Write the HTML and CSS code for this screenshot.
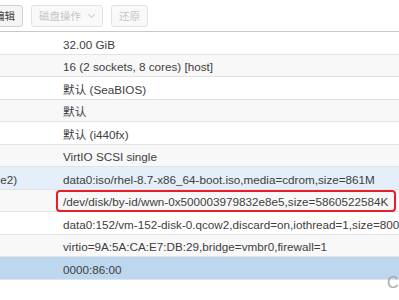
FILE: index.html
```html
<!DOCTYPE html>
<html>
  <head>
    <meta charset="utf-8">
    <meta name="viewport" content="width=device-width, initial-scale=1">
    <title>硬件</title>
    <link rel="stylesheet" href="styles.css">
  </head>
  <body>
    <div class="toolbar">
      <button class="btn edit">编辑</button>
      <button class="btn disabled">磁盘操作<span class="caret"></span></button>
      <button class="btn disabled">还原</button>
    </div>
    <div class="grid-wrap">
      <div class="grid">
        <div class="row"><div class="key">内存</div><div class="val">32.00 GiB</div></div>
        <div class="row alt"><div class="key">处理器</div><div class="val">16 (2 sockets, 8 cores) [host]</div></div>
        <div class="row"><div class="key">BIOS</div><div class="val">默认 (SeaBIOS)</div></div>
        <div class="row alt"><div class="key">显示</div><div class="val">默认</div></div>
        <div class="row"><div class="key">机型</div><div class="val">默认 (i440fx)</div></div>
        <div class="row alt"><div class="key">SCSI控制器</div><div class="val">VirtIO SCSI single</div></div>
        <div class="row over"><div class="key">CD/DVD 驱动器 (ide2)</div><div class="val">data0:iso/rhel-8.7-x86_64-boot.iso,media=cdrom,size=861M</div></div>
        <div class="row alt"><div class="key">硬盘 (scsi1)</div><div class="val">/dev/disk/by-id/wwn-0x500003979832e8e5,size=5860522584K<span class="mark"></span></div></div>
        <div class="row"><div class="key">硬盘 (scsi0)</div><div class="val">data0:152/vm-152-disk-0.qcow2,discard=on,iothread=1,size=800G</div></div>
        <div class="row alt"><div class="key">网络设备 (net0)</div><div class="val">virtio=9A:5A:CA:E7:DB:29,bridge=vmbr0,firewall=1</div></div>
        <div class="row selected"><div class="key">PCI设备 (hostpci0)</div><div class="val">0000:86:00</div></div>
      </div>
    </div>
    <div class="watermark">CSDN</div>
  </body>
</html>
```

FILE: styles.css
```css
body {
  margin: 0;
  font-family: "Liberation Sans", Arial, "Noto Sans CJK SC", sans-serif;
  color: #404040;
  background: #fff;
  overflow: hidden;
  height: 300px;
  position: relative;
}

.toolbar {
  display: flex;
  align-items: center;
  gap: 8px;
  height: 32px;
  border-bottom: 1px solid #c8c8c8;
  box-sizing: border-box;
}

.btn {
  height: 22px;
  box-sizing: border-box;
  padding: 0 7px;
  border: 1px solid #d0d0d0;
  border-radius: 3px;
  background: #f5f5f5;
  color: #404040;
  font-family: inherit;
  font-size: 10.5px;
  display: flex;
  align-items: center;
  gap: 8px;
}

.btn.edit {
  margin-left: -14px;
}

.btn.disabled {
  color: #c6c6c6;
  border-color: #e2e2e2;
  background: #f9f9f9;
}

.caret {
  width: 4px;
  height: 4px;
  border-right: 1px solid #cfcfcf;
  border-bottom: 1px solid #cfcfcf;
  transform: rotate(45deg);
  margin: -3px 1px 0 0;
}

.grid-wrap {
  overflow: hidden;
}

.grid {
  margin-left: -113px;
  font-size: 11.7px;
}

.row {
  display: grid;
  grid-template-columns: 170px 1fr;
  height: 22.55px;
  box-sizing: border-box;
  border-bottom: 1px solid #e3e3e3;
  line-height: 21.5px;
  padding-top: 1.5px;
  white-space: nowrap;
}

.row.alt {
  background: #f8f8f8;
}

.row.over {
  background: #e4eff9;
}

.row.selected {
  background: #bcd7ee;
}

.key {
  padding-left: 14px;
  overflow: hidden;
}

.val {
  padding-left: 6px;
  position: relative;
}

.mark {
  position: absolute;
  left: -1px;
  top: -1.5px;
  width: 340px;
  height: 22px;
  box-sizing: border-box;
  border: 2px solid #e6202a;
  border-radius: 4px;
}

.watermark {
  position: absolute;
  left: 387px;
  top: 274px;
  font-size: 16px;
  color: #a9a9a9;
  white-space: nowrap;
}
```
